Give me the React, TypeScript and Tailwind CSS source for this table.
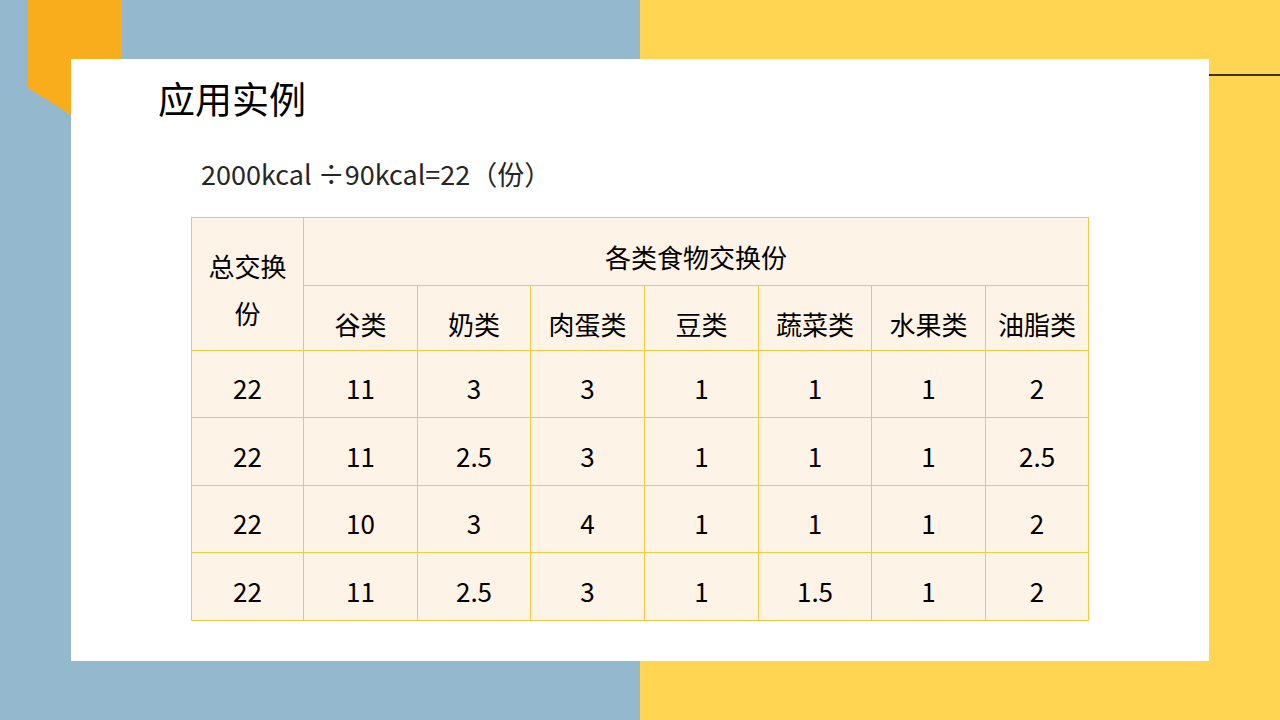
import React from "react";

const cols = [112, 114, 113, 114, 114, 113, 114, 103];
const heads = ["谷类", "奶类", "肉蛋类", "豆类", "蔬菜类", "水果类", "油脂类"];
const rows = [
  ["22", "11", "3", "3", "1", "1", "1", "2"],
  ["22", "11", "2.5", "3", "1", "1", "1", "2.5"],
  ["22", "10", "3", "4", "1", "1", "1", "2"],
  ["22", "11", "2.5", "3", "1", "1.5", "1", "2"],
];
const rowH = [67, 68, 67, 68];

export default function App() {
  const font = { fontFamily: '"Noto Sans CJK SC", "Noto Sans", sans-serif' };
  return (
    <div className="relative w-[1280px] h-[720px] overflow-hidden" style={font}>
      <div className="flex w-full h-full">
        <div className="w-[640px] h-full bg-[#94b9ce]" />
        <div className="flex-1 h-full bg-[#ffd552]" />
      </div>
      <div
        className="absolute left-[28px] top-0 w-[94px] h-[115px] bg-[#f9ad1c]"
        style={{ clipPath: "polygon(0 0, 100% 0, 100% 100%, 43px 100%, 0 88px)" }}
      />
      <div className="absolute left-[1209px] top-[74px] w-[71px] h-[2px] bg-[#3a3320]" />
      <div className="absolute left-[71px] top-[59px] w-[1138px] h-[602px] bg-white">
        <div className="pl-[87px] pt-[16px] text-[37px] leading-[46px] text-black">应用实例</div>
        <div className="pl-[130px] pt-[35px] text-[27px] leading-[36px] text-[#262626]">
          2000kcal ÷90kcal=22（份）
        </div>
        <div className="pl-[120px] pt-[25px]">
          <table className="border-collapse table-fixed bg-[#fdf3e7] text-black text-[26px]" style={{ width: 897 }}>
            <colgroup>
              {cols.map((w, i) => (
                <col key={i} style={{ width: w }} />
              ))}
            </colgroup>
            <tbody>
              <tr className="h-[68px]">
                <td
                  rowSpan={2}
                  className="border border-[#f3c843] text-center align-middle leading-[47px] pt-[10px] p-0"
                >
                  总交换
                  <br />份
                </td>
                <td colSpan={7} className="border border-[#f3c843] text-center align-middle pt-[10px] p-0 leading-[32px]">
                  各类食物交换份
                </td>
              </tr>
              <tr className="h-[65px]">
                {heads.map((h) => (
                  <td key={h} className="border border-[#f3c843] text-center align-middle pt-[12px] p-0 leading-[32px] whitespace-nowrap">
                    {h}
                  </td>
                ))}
              </tr>
              {rows.map((r, ri) => (
                <tr key={ri} style={{ height: rowH[ri] }}>
                  {r.map((c, ci) => (
                    <td key={ci} className="border border-[#f3c843] text-center align-middle pt-[8px] p-0 leading-[32px]">
                      {c}
                    </td>
                  ))}
                </tr>
              ))}
            </tbody>
          </table>
        </div>
      </div>
    </div>
  );
}
